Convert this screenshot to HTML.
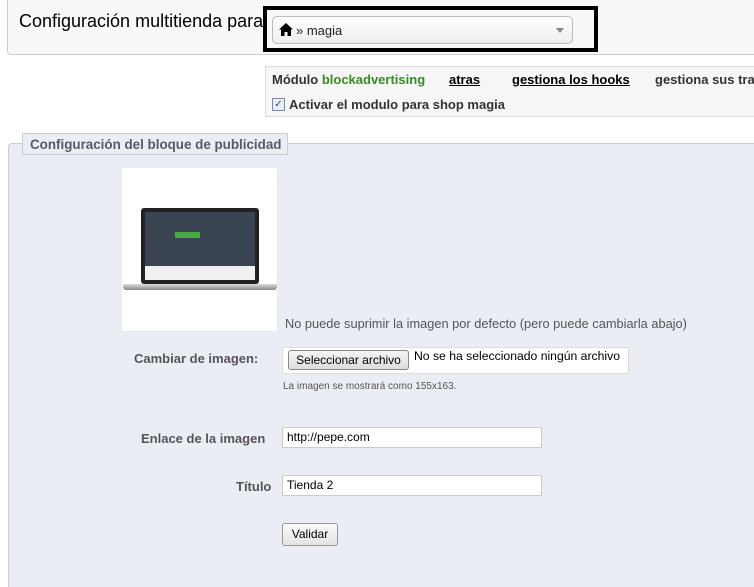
<!DOCTYPE html>
<html><head><meta charset="utf-8"><style>
*{margin:0;padding:0;box-sizing:border-box}
html,body{overflow:hidden}
body{width:754px;height:587px;background:#fff;position:relative;overflow:hidden;font-family:"Liberation Sans",Arial,sans-serif;font-size:13px;color:#333}
.a{position:absolute;white-space:nowrap}
</style></head><body>
<div class="a" style="left:7px;top:0;width:747px;height:55px;background:#f8f8f8;border:1px solid #ccc;border-top:none;border-right:none;border-radius:0 0 0 4px"></div>
<div class="a" style="left:19px;top:11px;font-size:18px;color:#000">Configuración multitienda para</div>
<div class="a" style="left:263px;top:6px;width:335px;height:46px;border:4px solid #000;background:#f8f8f8"></div>
<div class="a" style="left:272px;top:16px;width:301px;height:28px;border:1px solid #bbb;border-radius:5px;background:linear-gradient(#fff,#eee)"></div>
<svg class="a" style="left:279px;top:23px" width="14" height="13" viewBox="0 0 14 13"><path d="M7 0L0 6.5h2V13h3.5V9h3v4H12V6.5h2z" fill="#000"/></svg>
<div class="a" style="left:296px;top:23px;font-size:13px;color:#222">» magia</div>
<div class="a" style="left:556px;top:28px;width:0;height:0;border-left:4px solid transparent;border-right:4px solid transparent;border-top:5px solid #888"></div>

<div class="a" style="left:265px;top:66px;width:489px;height:51px;background:#f6f6f6;border:1px solid #ddd;border-right:none;overflow:hidden">
<div class="a" style="left:6px;top:5px;font-weight:bold;color:#333">Módulo <span style="color:#3a8a26">blockadvertising</span></div>
<div class="a" style="left:183px;top:5px;font-weight:bold;color:#000;text-decoration:underline">atras</div>
<div class="a" style="left:246px;top:5px;font-weight:bold;color:#000;text-decoration:underline">gestiona los hooks</div>
<div class="a" style="left:389px;top:5px;font-weight:bold;color:#333">gestiona sus traducciones</div>
<div class="a" style="left:6px;top:31px;width:13px;height:13px;border:1px solid #7a8da8;background:#e8eef8;font-size:10px;line-height:11px;text-align:center;color:#2a4a8a">✓</div>
<div class="a" style="left:23px;top:30px;font-weight:bold;color:#333">Activar el modulo para shop magia</div>
</div>

<div class="a" style="left:8px;top:143px;width:746px;height:444px;background:#eaedf4;border:1px solid #ccc;border-right:none;border-bottom:none;border-radius:4px 0 0 0"></div>
<div class="a" style="left:22px;top:133px;width:266px;height:22px;background:#eaedf4;border:1px solid #ccc"></div>
<div class="a" style="left:30px;top:137px;font-weight:bold;font-size:13.4px;color:#585a69">Configuración del bloque de publicidad</div>

<div class="a" style="left:122px;top:168px;width:155px;height:163px;background:#fff"></div>
<div class="a" style="left:141px;top:208px;width:118px;height:76px;background:#222;border-radius:3px"></div>
<div class="a" style="left:145px;top:212px;width:110px;height:54px;background:#3a4452"></div>
<div class="a" style="left:145px;top:266px;width:110px;height:14px;background:#f0f0f0"></div>
<div class="a" style="left:123px;top:284px;width:154px;height:6px;background:linear-gradient(#ddd,#888);border-radius:0 0 3px 3px"></div>
<div class="a" style="left:175px;top:232px;width:25px;height:6px;background:#4a4"></div>

<div class="a" style="left:285px;top:316px;font-size:12.8px;color:#555">No puede suprimir la imagen por defecto (pero puede cambiarla abajo)</div>
<div class="a" style="left:134px;top:351px;font-weight:bold;color:#555">Cambiar de imagen:</div>
<div class="a" style="left:282px;top:347px;width:347px;height:27px;background:#fff;border:1px solid #ddd"></div>
<div class="a" style="left:288px;top:350px;width:121px;height:20px;border:1px solid #888;border-radius:3px;background:linear-gradient(#f4f4f4,#ddd);font-size:12px;line-height:18px;text-align:center;color:#000">Seleccionar archivo</div>
<div class="a" style="left:414px;top:349px;font-size:12.2px;color:#000">No se ha seleccionado ningún archivo</div>
<div class="a" style="left:283px;top:381px;font-size:10px;color:#555">La imagen se mostrará como 155x163.</div>

<div class="a" style="left:141px;top:431px;font-weight:bold;color:#555">Enlace de la imagen</div>
<div class="a" style="left:282px;top:427px;width:260px;height:21px;background:#fff;border:1px solid #ccc;padding-left:4px;font-size:12px;line-height:19px;color:#000">http://pepe.com</div>
<div class="a" style="left:236px;top:479px;font-weight:bold;color:#555">Título</div>
<div class="a" style="left:282px;top:475px;width:260px;height:21px;background:#fff;border:1px solid #ccc;padding-left:4px;font-size:12px;line-height:19px;color:#000">Tienda 2</div>
<div class="a" style="left:282px;top:523px;width:56px;height:23px;border:1px solid #999;border-radius:3px;background:linear-gradient(#fafafa,#e4e4e4);font-size:12px;line-height:21px;text-align:center;color:#000">Validar</div>
</body></html>
